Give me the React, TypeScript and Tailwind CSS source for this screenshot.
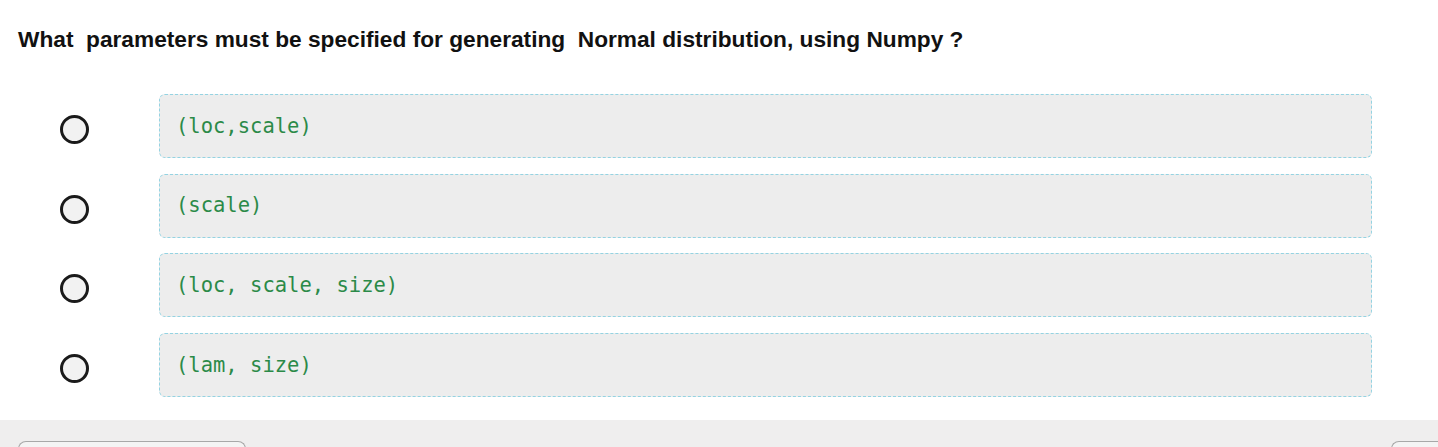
import React from "react";

const options = ["(loc,scale)", "(scale)", "(loc, scale, size)", "(lam, size)"];

export default function App() {
  return (
    <div className="w-[1438px] h-[447px] overflow-hidden bg-white flex flex-col">
      <div className="pl-[18px] pt-[25px] h-[420px] shrink-0 flex flex-col">
        <div
          className="text-[22.7px] leading-[28px] font-bold text-[#111] whitespace-pre"
          style={{ fontFamily: '"Liberation Sans", Arial, sans-serif' }}
        >
          {"What  parameters must be specified for generating  Normal distribution, using Numpy ?"}
        </div>
        <div className="mt-[41px] flex flex-col gap-[15.67px]">
          {options.map((o) => (
            <div key={o} className="flex items-center h-[64px]">
              <div className="w-[141px] flex justify-start pl-[42px] pt-[7px]">
                <div className="w-[29px] h-[29px] rounded-full border-[3px] border-[#1a1a1a] bg-[#f2f2f2]" />
              </div>
              <div className="w-[1213px] h-[64px] rounded-[6px] border border-dashed border-[#94d3e2] bg-[#ededed] flex items-center pl-[16px]">
                <span
                  className="text-[20.5px] text-[#2b8a48]"
                  style={{ fontFamily: '"DejaVu Sans Mono", "Liberation Mono", monospace' }}
                >
                  {o}
                </span>
              </div>
            </div>
          ))}
        </div>
      </div>
      <div className="flex-1 bg-[#efeeee] flex justify-between items-start pt-[21px] pl-[18px]">
        <div className="w-[228px] h-[20px] rounded-t-[8px] border border-b-0 border-[#a8a8a8] bg-[#f4f4f4]" />
        <div className="w-[47px] h-[20px] rounded-tl-[8px] border border-b-0 border-r-0 border-[#a8a8a8] bg-[#f4f4f4]" />
      </div>
    </div>
  );
}
